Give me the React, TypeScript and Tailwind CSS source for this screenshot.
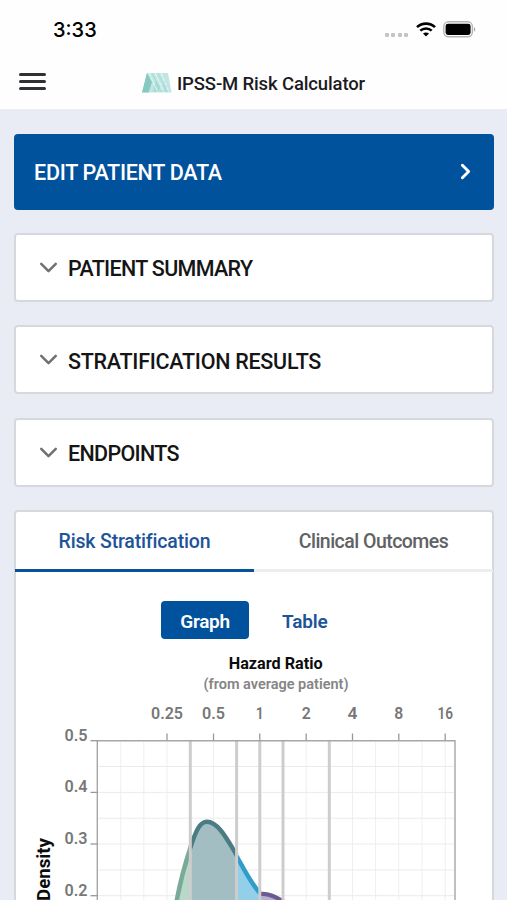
import { ChevronDown, ChevronRight } from 'lucide-react'

const sections = [
  { title: 'PATIENT SUMMARY', tracking: 'tracking-[-0.68px]' },
  { title: 'STRATIFICATION RESULTS', tracking: 'tracking-[-0.27px]' },
  { title: 'ENDPOINTS', tracking: 'tracking-[-0.68px]' },
]

const xTicks = [
  { x: 167, label: '0.25', width: 32 },
  { x: 213.5, label: '0.5', width: 23 },
  { x: 259.8, label: '1', width: 8 },
  { x: 306.2, label: '2', width: 9 },
  { x: 352.5, label: '4', width: 10 },
  { x: 398.8, label: '8', width: 9 },
  { x: 445.2, label: '16', width: 15.5 },
]

const yTicks = [
  { y: 740.7, label: '0.5' },
  { y: 792.4, label: '0.4' },
  { y: 844, label: '0.3' },
  { y: 895.7, label: '0.2' },
]

const gridX = [120.7, 143.8, 167, 190.2, 213.5, 236.6, 259.8, 283, 306.2, 329.3, 352.5, 375.6, 398.8, 422, 445.2]
const gridY = [766.5, 792.4, 818.2, 844, 869.9, 895.7]
const cutoffs = [190.3, 236.6, 259.8, 283, 329.3]

function StatusBar() {
  return (
    <div className="flex h-[54px] items-center justify-between pt-[6px] pr-[31px] pl-[53px]">
      <span className="font-['Inter'] text-[20px] leading-[26px] font-medium text-black">3:33</span>
      <div className="flex items-center">
        <div className="mt-[9px] mr-[8px] flex gap-[2.4px]">
          <span className="h-[4px] w-[4px] rounded-[1px] bg-[#c4c4c4]" />
          <span className="h-[4px] w-[4px] rounded-[1px] bg-[#c4c4c4]" />
          <span className="h-[4px] w-[4px] rounded-[1px] bg-[#c4c4c4]" />
          <span className="h-[4px] w-[4px] rounded-[1px] bg-[#c4c4c4]" />
        </div>
        <svg width="20" height="15" viewBox="0 0 20 15" className="mt-[-2px] mr-[7px]" fill="none" stroke="#000">
          <path d="M1 5.1C6 .4 14 .4 19 5.1" strokeWidth="2.6" />
          <path d="M4.3 8.6c3.2-2.9 8.2-2.9 11.4 0" strokeWidth="2.5" />
          <path d="M7 11.5c1.7-1.5 4.3-1.5 6 0l-3 3z" fill="#000" stroke="none" />
        </svg>
        <svg width="33" height="17" viewBox="0 0 33 17" className="mt-[-1px]" fill="none">
          <rect x=".8" y=".8" width="28.6" height="15" rx="4.8" stroke="#b4b4b4" strokeWidth="1.4" />
          <rect x="2.6" y="2.7" width="25" height="11.2" rx="2.4" fill="#000" />
          <path d="M31 6v4.7c1.7-.8 1.7-3.9 0-4.7z" fill="#a5a5a5" />
        </svg>
      </div>
    </div>
  )
}

function Logo() {
  return (
    <svg width="30" height="20" viewBox="0 0 30 20">
      <path d="M5 0h21l3.5 19.5H0z" fill="#bfe6e2" />
      <path d="M5 0 0 19.5h6.5L10 9z" fill="#86c8c2" />
      <path d="m14 7-3 12h6l1-5z" fill="#a9dad6" />
      <path d="m22 7-2 12h6l-1-7z" fill="#b2dfdb" />
      <path d="m7 0 9 19M13 0l9 19M19 0l8 19" stroke="#e3f5f3" strokeWidth="1.2" strokeDasharray="4 1" />
      <path d="m10 0 9 19M16 0l9 19" stroke="#a0d6d1" strokeWidth=".7" />
    </svg>
  )
}

function Header() {
  return (
    <header className="flex h-[55px] items-center pl-[19px]">
      <div className="flex w-[27px] flex-col gap-[4.5px]">
        <span className="h-[2.5px] rounded-full bg-[#303034]" />
        <span className="h-[2.5px] rounded-full bg-[#303034]" />
        <span className="h-[2.5px] rounded-full bg-[#303034]" />
      </div>
      <div className="ml-[96px] flex items-center gap-[5px] pt-[3px] text-[#1b1b1f]">
        <Logo />
        <h1 className="pt-[2px] text-[18.5px] leading-[26px] font-medium tracking-[-0.14px] whitespace-nowrap">
          IPSS-M Risk Calculator
        </h1>
      </div>
    </header>
  )
}

function Chart() {
  return (
    <svg width="478" height="250" viewBox="15 650 478 250" className="block">
      <g textAnchor="middle">
        <text x="275.7" y="669" fontSize="16" fontWeight="700" textLength="94" lengthAdjust="spacingAndGlyphs" fill="#0c0c0c">
          Hazard Ratio
        </text>
        <text x="276" y="688.5" fontSize="14" fontWeight="600" textLength="145" lengthAdjust="spacingAndGlyphs" fill="#858585">
          (from average patient)
        </text>
        {xTicks.map((t) => (
          <text key={t.label} x={t.x} y="719.3" fontSize="16" fontWeight="600" textLength={t.width} lengthAdjust="spacingAndGlyphs" fill="#777">
            {t.label}
          </text>
        ))}
      </g>

      {gridX.map((x) => (
        <path key={x} d={`M${x} 742v158`} stroke="#efefef" strokeWidth="1" />
      ))}
      {gridY.map((y) => (
        <path key={y} d={`M98 ${y}h356`} stroke="#ebebeb" strokeWidth="1" />
      ))}

      <path d="M177 900C181 879 185 863 190.3 848V900z" fill="#b9d8c7" />
      <path d="M190.3 848C196 829 200 822 207 821.7C218 821.7 227 839 236.6 855V900H190.3z" fill="#a3bec3" />
      <path d="M236.6 855C244 869 250 881 259.8 893V900H236.6z" fill="#93cfe9" />
      <path d="M259.8 893.5C268 893 274 896 281 901H259.8z" fill="#b9b0d0" />
      <g fill="none" strokeWidth="4.4">
        <path d="M176 904C180 882 185 864 190.3 848" stroke="#7ba999" />
        <path d="M190.3 848C196 830 200 821.8 207 821.7C218 821.7 227 839 236.6 855" stroke="#4b7c83" />
        <path d="M236.6 856C244 869 250 882 259.8 893" stroke="#309dc9" />
        <path d="M259.8 894C268 893 275 896 284 902" stroke="#6b5b91" />
      </g>

      {cutoffs.map((x) => (
        <path key={x} d={`M${x} 741v159`} stroke="#cdcdcd" strokeWidth="3" />
      ))}
      <path d="M97.3 900V740.7H455V900" fill="none" stroke="#a6a6a6" strokeWidth="1.4" />

      {xTicks.map((t) => (
        <path key={t.label} d={`M${t.x} 733.5v7`} stroke="#999" strokeWidth="1.3" />
      ))}
      {yTicks.map((t) => (
        <g key={t.label}>
          <path d={`M90.5 ${t.y}h7`} stroke="#999" strokeWidth="1.3" />
          <text x="64.5" y={t.y} fontSize="16" fontWeight="600" textLength="23" lengthAdjust="spacingAndGlyphs" fill="#777">
            {t.label}
          </text>
        </g>
      ))}
      <text transform="translate(50 901) rotate(-90)" fontSize="18" fontWeight="700" textLength="63" lengthAdjust="spacingAndGlyphs" fill="#0c0c0c">
        Density
      </text>
    </svg>
  )
}

export default function App() {
  return (
    <div className="h-[900px] w-[507px] overflow-hidden bg-[#e9ecf4] font-['Roboto',sans-serif]">
      <div className="bg-[#fefefe]">
        <StatusBar />
        <Header />
      </div>

      <main className="flex flex-col gap-[23.4px] pt-[24.5px] pr-[13px] pl-[14px]">
        <button className="flex h-[76px] shrink-0 items-center justify-between rounded-[4px] bg-[#01529c] pr-[16px] pl-[20px] text-white">
          <span className="pt-[3px] text-[21.5px] leading-[26px] font-medium tracking-[-0.27px]">EDIT PATIENT DATA</span>
          <ChevronRight className="h-[25px] w-[25px]" strokeWidth={2.8} />
        </button>

        {sections.map((s) => (
          <button
            key={s.title}
            className="flex h-[69px] shrink-0 items-center rounded-[4px] border-2 border-[#d6d9db] bg-white pl-[18px] text-[#151515]"
          >
            <ChevronDown className="mr-[5px] h-[29px] w-[29px] text-[#717171]" strokeWidth={2.1} />
            <span className={`pt-[4px] text-[21.5px] leading-[26px] font-medium ${s.tracking}`}>{s.title}</span>
          </button>
        ))}

        <section className="h-[420px] shrink-0 rounded-t-[4px] border-2 border-[#d6d9db] bg-white">
          <div className="-mx-px grid h-[60px] grid-cols-2">
            <button className="border-b-[3.5px] border-[#08519b] pt-[3px] text-[19.5px] leading-[26px] font-medium tracking-[-0.17px] text-[#1d5499]">
              Risk Stratification
            </button>
            <button className="border-b-[3.5px] border-[#eceeee] pt-[3px] text-[19.5px] leading-[26px] font-medium tracking-[-0.53px] text-[#606264]">
              Clinical Outcomes
            </button>
          </div>
          <div className="flex h-[78px] items-center pt-[18px] pl-[145px]">
            <button className="h-[38px] w-[88px] rounded-[4px] bg-[#01529c] pt-[3px] text-[19px] leading-[26px] font-semibold tracking-[-0.3px] text-white">
              Graph
            </button>
            <button className="ml-[33px] pt-[3px] text-[19px] leading-[26px] font-semibold tracking-[-0.15px] text-[#1d5499]">
              Table
            </button>
          </div>
          <div className="-mx-px">
            <Chart />
          </div>
        </section>
      </main>
    </div>
  )
}
